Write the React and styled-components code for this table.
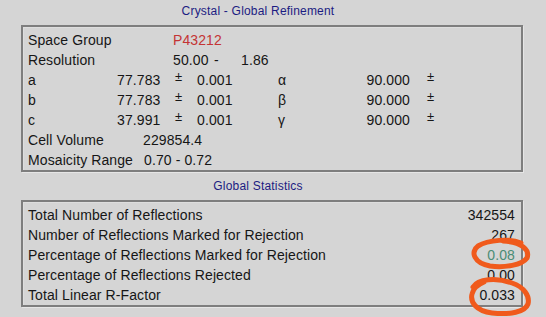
import React from "react";
import styled, { createGlobalStyle } from "styled-components";

const Global = createGlobalStyle`
  html, body { margin: 0; padding: 0; background: #d5d5d5; }
  body { font-family: "Liberation Sans", Arial, sans-serif; color: #161616; }
`;

const Page = styled.div`
  position: relative;
  width: 546px;
  height: 317px;
  background: #d5d5d5;
  overflow: hidden;
`;

const Title = styled.div`
  font-size: 12px;
  line-height: 20px;
  letter-spacing: 0.2px;
  color: #1c1c82;
  text-align: center;
  padding-right: 30px;
  margin-top: ${(p) => p.$mt}px;
  margin-bottom: ${(p) => p.$mb}px;
`;

const Panel = styled.div`
  margin-left: 21px;
  width: 502px;
  box-sizing: border-box;
  border: 2px solid #7e7e7e;
  padding: 3px 6px 0 5px;
  box-shadow: 1px 1px 0 #e6e6e6, inset 1px 1px 0 #dedede;
  font-size: 14px;
  line-height: 20px;
  letter-spacing: 0.1px;
`;

const Row = styled.div`
  display: flex;
  height: 20px;
  justify-content: ${(p) => (p.$spread ? "space-between" : "flex-start")};
  white-space: nowrap;
`;

const Cell = styled.span`
  flex: none;
  width: ${(p) => (p.$w ? `${p.$w}px` : "auto")};
  text-align: ${(p) => p.$align || "left"};
  color: ${(p) => p.$color || "inherit"};
`;

const PlusMinus = styled.span`
  flex: none;
  width: ${(p) => p.$w}px;
  padding-left: ${(p) => p.$pl}px;
  box-sizing: border-box;
  font-size: 13px;
  position: relative;
  top: -3px;
`;

const Overlay = styled.svg`
  position: absolute;
  left: 0;
  top: 0;
  pointer-events: none;
`;

const cellRows = [
  { l: "a", v: "77.783", g: "\u03b1" },
  { l: "b", v: "77.783", g: "\u03b2" },
  { l: "c", v: "37.991", g: "\u03b3" },
];

const stats = [
  { l: "Total Number of Reflections", v: "342554" },
  { l: "Number of Reflections Marked for Rejection", v: "267" },
  { l: "Percentage of Reflections Marked for Rejection", v: "0.08", c: "#4a8c74" },
  { l: "Percentage of Reflections Rejected", v: "0.00" },
  { l: "Total Linear R-Factor", v: "0.033" },
];

export default function App() {
  return (
    <Page>
      <Global />
      <Title $mt={1} $mb={4}>Crystal - Global Refinement</Title>
      <Panel>
        <Row>
          <Cell $w={145}>Space Group</Cell>
          <Cell $color="#c43434">P43212</Cell>
        </Row>
        <Row>
          <Cell $w={145}>Resolution</Cell>
          <Cell $w={41}>50.00</Cell>
          <Cell $w={27}>-</Cell>
          <Cell>1.86</Cell>
        </Row>
        {cellRows.map((r) => (
          <Row key={r.l}>
            <Cell $w={89}>{r.l}</Cell>
            <Cell $w={43} $align="right">{r.v}</Cell>
            <PlusMinus $w={37} $pl={15}>±</PlusMinus>
            <Cell $w={81}>0.001</Cell>
            <Cell $w={49}>{r.g}</Cell>
            <Cell $w={83} $align="right">90.000</Cell>
            <PlusMinus $w={40} $pl={17}>±</PlusMinus>
          </Row>
        ))}
        <Row>
          <Cell $w={115}>Cell Volume</Cell>
          <Cell>229854.4</Cell>
        </Row>
        <Row>
          <Cell $w={116}>Mosaicity Range</Cell>
          <Cell>0.70 - 0.72</Cell>
        </Row>
      </Panel>
      <Title $mt={4} $mb={4}>Global Statistics</Title>
      <Panel>
        {stats.map((s) => (
          <Row $spread key={s.l}>
            <Cell>{s.l}</Cell>
            <Cell $color={s.c}>{s.v}</Cell>
          </Row>
        ))}
      </Panel>
      <Overlay width="546" height="317" viewBox="0 0 546 317">
        <path
          d="M521 243 C510 238 488 240 478 246 C470 252 474 263 490 266 C505 268 522 265 527 258 C530 250 522 242 503 241"
          fill="none"
          stroke="#f05a1c"
          strokeWidth="5"
          strokeLinecap="round"
        />
        <path
          d="M473 287 C478 279 496 277 512 283 C524 287 530 296 528 304 C525 312 510 315 492 313 C476 311 470 302 472 294 C473 289 477 285 484 282"
          fill="none"
          stroke="#f05a1c"
          strokeWidth="5"
          strokeLinecap="round"
        />
      </Overlay>
    </Page>
  );
}
